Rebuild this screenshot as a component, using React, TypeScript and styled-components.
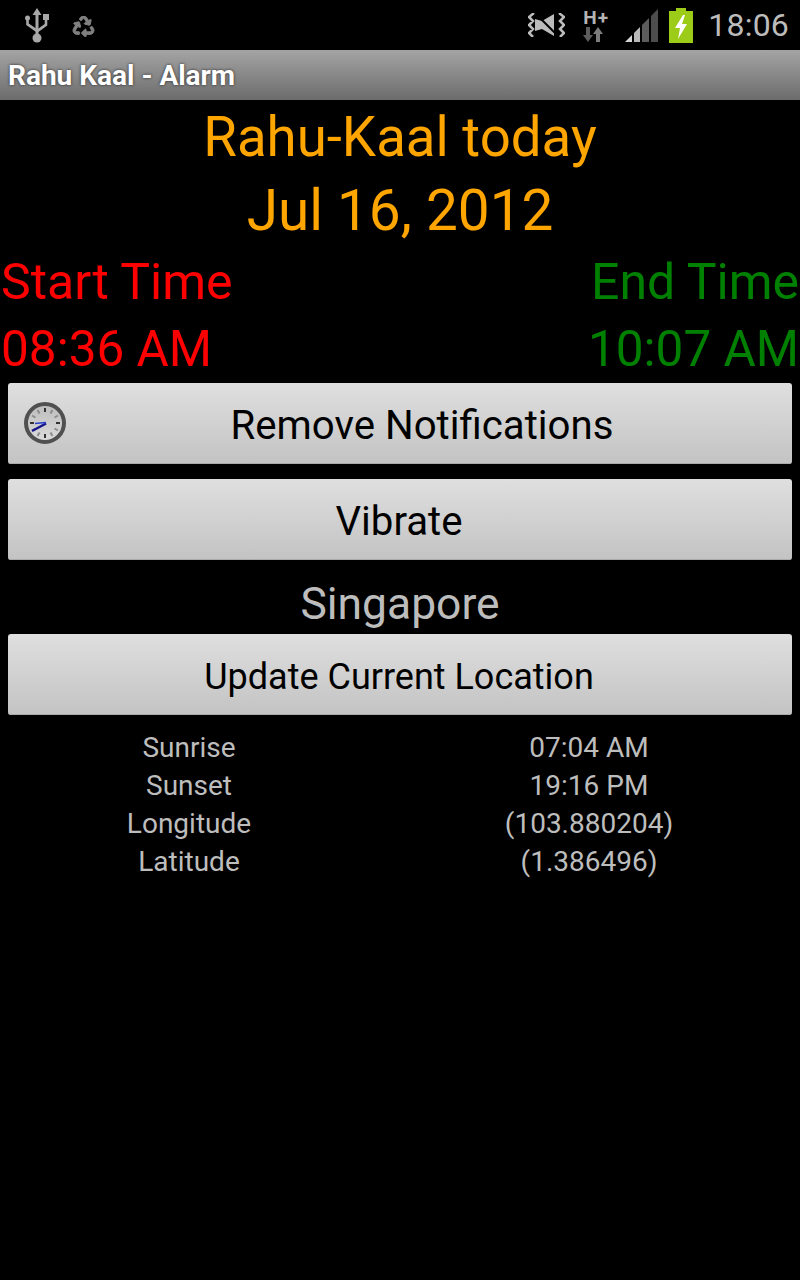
import React from 'react';
import styled, { createGlobalStyle } from 'styled-components';
import { FaRecycle } from 'react-icons/fa';

const GlobalStyle = createGlobalStyle`
  html, body {
    margin: 0;
    padding: 0;
    background: #000;
    font-family: Roboto, "Liberation Sans", sans-serif;
  }
`;

const Screen = styled.div`
  width: 800px;
  height: 1280px;
  background: #000;
  overflow: hidden;
`;

const StatusBar = styled.div`
  height: 50px;
  display: flex;
  align-items: center;
  justify-content: space-between;
  padding: 0 11px 0 25px;
  box-sizing: border-box;
`;

const StatusGroup = styled.div`
  display: flex;
  align-items: center;
`;

const ClockText = styled.span`
  font-size: 32px;
  color: #bcbcbc;
  margin-left: 15px;
  letter-spacing: 0.2px;
`;

const RecycleGlyph = styled(FaRecycle)`
  width: 23px;
  height: 21px;
  margin-left: 23px;
  margin-top: 3px;
  color: #808080;
  stroke: #808080;
  stroke-width: 24px;
`;

const DataStack = styled.div`
  width: 28px;
  margin-left: 18px;
  display: flex;
  flex-direction: column;
  align-items: flex-start;
`;

const DataLabel = styled.span`
  font-size: 19px;
  font-weight: 700;
  line-height: 18px;
  color: #b4b4b4;
  letter-spacing: 1px;
`;

const TitleBar = styled.div`
  height: 50px;
  padding-left: 8px;
  box-sizing: border-box;
  display: flex;
  align-items: center;
  background: linear-gradient(#a4a4a4, #6c6c6c);
  color: #fff;
  font-size: 28px;
  font-weight: 700;
  text-shadow: 0 0 3px #222;
`;

const Heading = styled.div<{ $size: number; $height: number; $top?: number }>`
  color: #ffa500;
  text-align: center;
  font-size: ${p => p.$size}px;
  line-height: ${p => p.$height}px;
  padding-top: ${p => p.$top || 0}px;
`;

const TimeRow = styled.div<{ $size: number; $height: number }>`
  display: flex;
  justify-content: space-between;
  font-size: ${p => p.$size}px;
  line-height: ${p => p.$height}px;
  padding: 0 1px;
`;

const TimeText = styled.span<{ $end?: boolean }>`
  color: ${p => (p.$end ? '#008000' : '#ff0000')};
`;

const TimesBlock = styled.div`
  padding-bottom: 3px;
`;

const ActionButton = styled.button<{ $size: number; $iconPad?: number }>`
  position: relative;
  display: block;
  width: 784px;
  height: 81px;
  margin: 0 8px;
  padding: 4px 2px 0 ${p => p.$iconPad || 0}px;
  border: 0;
  border-radius: 3px;
  background: linear-gradient(#dfdfdf, #c3c3c3);
  box-shadow: inset 0 -1px 0 #aaa;
  color: #000;
  font-family: inherit;
  font-size: ${p => p.$size}px;
`;

const ButtonIcon = styled.span`
  position: absolute;
  left: 16px;
  top: 19px;
  width: 42px;
  height: 42px;
`;

const ButtonGap = styled.div`
  height: 15px;
`;

const Location = styled.div`
  color: #bdbdbd;
  text-align: center;
  font-size: 44.400px;
  line-height: 54px;
  padding: 17px 0 3px;
`;

const InfoGrid = styled.div`
  display: grid;
  grid-template-columns: 378px 422px;
  margin-top: 14px;
  color: #bdbdbd;
  font-size: 28px;
  line-height: 38px;
  text-align: center;
`;

const UsbIcon = () => (
  <svg width="24" height="35" viewBox="0 0 24 35" fill="#a8a8a8">
    <path d="M12 0l4.500 7h-3v20h-3V7h-3z" />
    <circle cx="12" cy="30" r="4.500" />
    <circle cx="2.500" cy="10" r="2.500" />
    <path d="M1.200 10h2.600v5.500l8 5.500v3.400L1.200 17z" />
    <path d="M18 6h6v6h-1.700v5.500L12 25v-3.400l7.700-5.600V12H18z" />
  </svg>
);

const MuteIcon = () => (
  <svg width="37" height="24" viewBox="0 0 37 24">
    <path d="M7 6l7 2 12-7v22l-12-7-7 2z" fill="#bcbcbc" />
    <path d="M8 1l22 22" stroke="#000" strokeWidth="2" />
    <path d="M6 0L1 4l4 4-4 4 4 4-4 4 4 4M31 0l5 4-4 4 4 4-4 4 4 4-4 4" fill="none" stroke="#bcbcbc" strokeWidth="2.500" />
  </svg>
);

const DataArrows = () => (
  <svg width="20" height="15" viewBox="0 0 20 15">
    <path d="M3 0h4v8h3l-5 7-5-7h3z" fill="#5c5c5c" />
    <path d="M13 15V7h-3l5-7 5 7h-3v8z" fill="#7c7c7c" />
  </svg>
);

const SignalIcon = () => (
  <svg width="33" height="33" viewBox="0 0 33 33" style={{ marginLeft: 14 }}>
    <path d="M0 33 L7 26V33z" fill="#d4d4d4" />
    <path d="M9 24 L15 18V33H9z" fill="#b8b8b8" />
    <path d="M17 16 L24 9V33H17z" fill="#5c5c5c" />
    <path d="M26 7 L33 0V33H26z" fill="#4c4c4c" />
  </svg>
);

const BatteryIcon = () => (
  <svg width="24" height="35" viewBox="0 0 24 35" style={{ marginLeft: 11 }}>
    <path d="M7 0h10v3h7v32H0V3h7z" fill="#9ccb18" />
    <path d="M14 7L6 20h5l-2 11 9-15h-5l3-9z" fill="#fff" />
  </svg>
);

const ticks = Array.from({ length: 12 }, (_, i) => i * 30);

const ClockIcon = () => (
  <svg width="42" height="42" viewBox="0 0 42 42">
    <defs>
      <linearGradient id="clockFace" x1="0" y1="0" x2="0" y2="1">
        <stop offset="0" stopColor="#bcbcbc" />
        <stop offset="1" stopColor="#dcdcdc" />
      </linearGradient>
    </defs>
    <circle cx="21" cy="21" r="19" fill="url(#clockFace)" stroke="#505050" strokeWidth="4" />
    {ticks.map(a => (
      <path
        key={a}
        d="M21 6v4"
        transform={`rotate(${a} 21 21)`}
        stroke={a % 90 === 0 ? '#333' : '#8c8c8c'}
        strokeWidth="2"
      />
    ))}
    <path d="M22 21.500L8 29" stroke="#14148c" strokeWidth="2.500" />
    <path d="M22 20.500L11 21.500" stroke="#2a3fd0" strokeWidth="1.500" />
  </svg>
);

const infoRows = [
  ['Sunrise', '07:04 AM'],
  ['Sunset', '19:16 PM'],
  ['Longitude', '(103.880204)'],
  ['Latitude', '(1.386496)'],
];

const App = () => {
  return (
    <Screen>
      <GlobalStyle />
      <StatusBar>
        <StatusGroup>
          <UsbIcon />
          <RecycleGlyph />
        </StatusGroup>
        <StatusGroup>
          <MuteIcon />
          <DataStack>
            <DataLabel>H+</DataLabel>
            <DataArrows />
          </DataStack>
          <SignalIcon />
          <BatteryIcon />
          <ClockText>18:06</ClockText>
        </StatusGroup>
      </StatusBar>
      <TitleBar>Rahu Kaal - Alarm</TitleBar>
      <Heading $size={54.6} $height={74}>Rahu-Kaal today</Heading>
      <Heading $size={56.7} $height={70} $top={2}>Jul 16, 2012</Heading>
      <TimesBlock>
        <TimeRow $size={50} $height={72}>
          <TimeText>Start Time</TimeText>
          <TimeText $end>End Time</TimeText>
        </TimeRow>
        <TimeRow $size={49.5} $height={62}>
          <TimeText>08:36 AM</TimeText>
          <TimeText $end>10:07 AM</TimeText>
        </TimeRow>
      </TimesBlock>
      <ActionButton $size={40.2} $iconPad={46}>
        <ButtonIcon><ClockIcon /></ButtonIcon>
        Remove Notifications
      </ActionButton>
      <ButtonGap />
      <ActionButton $size={40.2}>Vibrate</ActionButton>
      <Location>Singapore</Location>
      <ActionButton $size={36}>Update Current Location</ActionButton>
      <InfoGrid>
        {infoRows.map(([label, value]) => (
          <React.Fragment key={label}>
            <span>{label}</span>
            <span>{value}</span>
          </React.Fragment>
        ))}
      </InfoGrid>
    </Screen>
  );
};

export default App;
